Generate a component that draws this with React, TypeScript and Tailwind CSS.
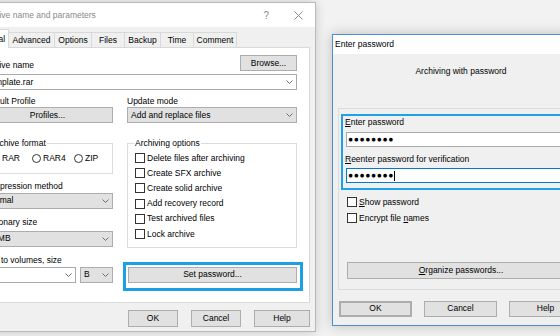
import type { ReactNode } from 'react'
import clsx from 'clsx'

function Chevron() {
    return (
        <svg width="7" height="4" viewBox="0 0 7 4" className="shrink-0">
            <path d="M0.5 0.5 L3.5 3.5 L6.5 0.5" fill="none" stroke="#6d6d6d" strokeWidth="1" />
        </svg>
    )
}

function WinButton({ children, className }: { children: ReactNode; className?: string }) {
    return (
        <div className={clsx('flex items-center justify-center bg-[#e1e1e1] border border-[#adadad] leading-[11px]', className)}>
            {children}
        </div>
    )
}

function Combo({ text, white, className }: { text: string; white?: boolean; className?: string }) {
    return (
        <div
            className={clsx(
                'h-[16px] flex items-center justify-between pl-[3px] pr-[3px] border whitespace-nowrap',
                white ? 'bg-white border-[#a9a9a9]' : 'bg-[#e1e1e1] border-[#adadad]',
                className
            )}
        >
            <span>{text}</span>
            <Chevron />
        </div>
    )
}

function Check({ children, className }: { children: ReactNode; className?: string }) {
    return (
        <div className={clsx('flex items-center gap-[2px] whitespace-nowrap', className)}>
            <span className="w-[10px] h-[10px] border border-[#333] bg-white shrink-0" />
            <span>{children}</span>
        </div>
    )
}

function Radio({ label, checked, className }: { label: string; checked?: boolean; className?: string }) {
    return (
        <div className={clsx('flex items-center gap-[2px] shrink-0', className)}>
            <span className="w-[9px] h-[9px] rounded-full border border-[#333] bg-white flex items-center justify-center shrink-0">
                {checked && <span className="w-[5px] h-[5px] rounded-full bg-[#333]" />}
            </span>
            <span>{label}</span>
        </div>
    )
}

const tabs = [
    { name: 'Advanced', w: 'w-[46px]' },
    { name: 'Options', w: 'w-[37px]' },
    { name: 'Files', w: 'w-[33px]' },
    { name: 'Backup', w: 'w-[36px]' },
    { name: 'Time', w: 'w-[33px]' },
    { name: 'Comment', w: 'w-[43px]' },
]

const options = [
    'Delete files after archiving',
    'Create SFX archive',
    'Create solid archive',
    'Add recovery record',
    'Test archived files',
    'Lock archive',
]

function ArchiveDialog() {
    return (
        <div className="absolute left-[-36px] top-[2px] w-[352px] h-[330px] border border-[#b9b9b9] bg-[#f0f0f0] flex flex-col shadow-[0_0_10px_rgba(0,0,0,0.18)]">
            {/* title bar, inactive */}
            <div className="h-[24px] bg-white flex items-center pl-[17px] text-[#8a8a8a] whitespace-nowrap">
                <span>Archive name and parameters</span>
                <span className="ml-auto text-[10px]">?</span>
                <svg width="9" height="9" viewBox="0 0 9 9" className="ml-[25px] mr-[12px]">
                    <path d="M0.5 0.5 L8.5 8.5 M8.5 0.5 L0.5 8.5" stroke="#8a8a8a" strokeWidth="1" />
                </svg>
            </div>

            <div className="pl-[6px] pt-[2px] flex flex-col">
                <div className="flex items-end h-[18px]">
                    <div className="relative z-10 -mb-px h-[19px] w-[38px] bg-white border border-b-0 border-[#d9d9d9] flex items-center justify-center">
                        General
                    </div>
                    {tabs.map((t) => (
                        <div
                            key={t.name}
                            className={clsx('h-[15px] border-t border-r border-[#d9d9d9] flex items-center justify-center', t.w)}
                        >
                            {t.name}
                        </div>
                    ))}
                </div>

                <div className="w-[339px] h-[256px] bg-white border border-[#d9d9d9]">
                    <div className="w-[315px] ml-[10px] flex flex-col whitespace-nowrap">
                        <div className="mt-[7px] h-[16px] flex items-end justify-between">
                            <span>Archive name</span>
                            <WinButton className="w-[57px] h-[16px]">Browse...</WinButton>
                        </div>
                        <Combo white text="Template.rar" className="mt-[3px]" />

                        <div className="mt-[6px] flex gap-[14px]">
                            <div className="w-[131px] flex flex-col">
                                <span>Default Profile</span>
                                <WinButton className="h-[16px]">Profiles...</WinButton>
                            </div>
                            <div className="w-[170px] flex flex-col">
                                <span>Update mode</span>
                                <Combo text="Add and replace files" />
                            </div>
                        </div>

                        <div className="mt-[14.5px] flex gap-[14px]">
                            <div className="w-[131px] flex flex-col">
                                <fieldset className="border border-[#dcdcdc] min-w-0">
                                    <legend className="ml-[7px] px-[1px]">Archive format</legend>
                                    <div className="pl-[8px] pt-[4px] pb-[9px] flex h-[24px] items-center">
                                        <Radio checked label="RAR" className="w-[41px]" />
                                        <Radio label="RAR4" className="w-[42px]" />
                                        <Radio label="ZIP" />
                                    </div>
                                </fieldset>
                                <span className="mt-[7.5px]">Compression method</span>
                                <Combo text="Normal" className="mt-[0.5px]" />
                                <span className="mt-[8.5px]">Dictionary size</span>
                                <Combo text="32 MB" className="mt-[2.5px]" />
                                <span className="mt-[8.5px]">Split to volumes, size</span>
                                <div className="mt-[0.5px] flex gap-[4px]">
                                    <Combo white text="" className="w-[94px]" />
                                    <Combo text="B" className="w-[33px]" />
                                </div>
                            </div>

                            <div className="w-[170px] flex flex-col">
                                <fieldset className="border border-[#dcdcdc] min-w-0">
                                    <legend className="ml-[6px] px-[1px]">Archiving options</legend>
                                    <div className="pl-[7px] pt-[2px] pb-[5px] flex flex-col">
                                        {options.map((o) => (
                                            <Check key={o} className="h-[15.2px]">
                                                {o}
                                            </Check>
                                        ))}
                                    </div>
                                </fieldset>
                                <div className="mt-[14px] -ml-[4px] -mr-[6px] border-[3px] border-[#1ba1e2] pt-[2px] pb-[5px] pl-[2px] pr-[3px]">
                                    <WinButton className="h-[16px]">Set password...</WinButton>
                                </div>
                            </div>
                        </div>
                    </div>
                </div>

                <div className="w-[339px] mt-[7px] flex justify-end gap-[13px]">
                    <WinButton className="w-[50px] h-[17px]">OK</WinButton>
                    <WinButton className="w-[50px] h-[17px]">Cancel</WinButton>
                    <WinButton className="w-[56px] h-[17px]">Help</WinButton>
                </div>
            </div>
        </div>
    )
}

function Dots({ caret }: { caret?: boolean }) {
    return (
        <span className="flex items-center text-[8.5px] tracking-[0.6px]">
            ●●●●●●●●
            {caret && <span className="w-px h-[10px] bg-black" />}
        </span>
    )
}

function PasswordDialog() {
    return (
        <div className="absolute left-[332px] top-[34px] w-[258px] h-[292px] border border-[#4a8fd6] bg-[#f0f0f0] flex flex-col shadow-[0_0_12px_rgba(0,0,0,0.22)] whitespace-nowrap">
            <div className="h-[19px] shrink-0 bg-white flex items-center pl-[2px]">Enter password</div>

            <div className="flex flex-col">
                <div className="pt-[11.5px] text-center">Archiving with password</div>

                <div className="mt-[31.5px] ml-[5px] w-[246px] border border-[#dcdcdc] flex flex-col">
                    <div className="mt-[5px] mx-[2px] border-2 border-[#1da1e8] pt-[0.5px] pb-[5px] flex flex-col">
                        <span className="pl-[2px]">
                            <span className="underline">E</span>nter password
                        </span>
                        <div className="mt-[4.5px] mx-[3px] h-[15px] bg-white border border-[#a9a9a9] flex items-center pl-[1px]">
                            <Dots />
                        </div>
                        <span className="mt-[6.5px] pl-[2px]">
                            <span className="underline">R</span>eenter password for verification
                        </span>
                        <div className="mt-[3.5px] mx-[3px] h-[15px] bg-white border border-[#0078d7] flex items-center pl-[1px]">
                            <Dots caret />
                        </div>
                    </div>
                    <Check className="mt-[6.5px] ml-[8px] h-[11px]">
                        <span className="underline">S</span>how password
                    </Check>
                    <Check className="mt-[5px] ml-[8px] h-[11px]">
                        Encrypt file <span className="underline">n</span>ames
                    </Check>
                    <WinButton className="mt-[38px] mx-[8px] mb-[10px] h-[17px]">
                        <span>
                            <span className="underline">O</span>rganize passwords...
                        </span>
                    </WinButton>
                </div>

                <div className="mt-[11px] ml-[6px] flex gap-[12px]">
                    <WinButton className="w-[73px] h-[16px] border-2 border-[#2b8ad8]">OK</WinButton>
                    <WinButton className="w-[73px] h-[16px]">Cancel</WinButton>
                    <WinButton className="w-[73px] h-[16px]">Help</WinButton>
                </div>
            </div>
        </div>
    )
}

export default function App() {
    return (
        <div className="relative w-[560px] h-[336px] overflow-hidden bg-[#f2f2f2] text-black text-[8.5px] leading-[11px] font-['Liberation_Sans',Arial,sans-serif]">
            <ArchiveDialog />
            <PasswordDialog />
        </div>
    )
}
